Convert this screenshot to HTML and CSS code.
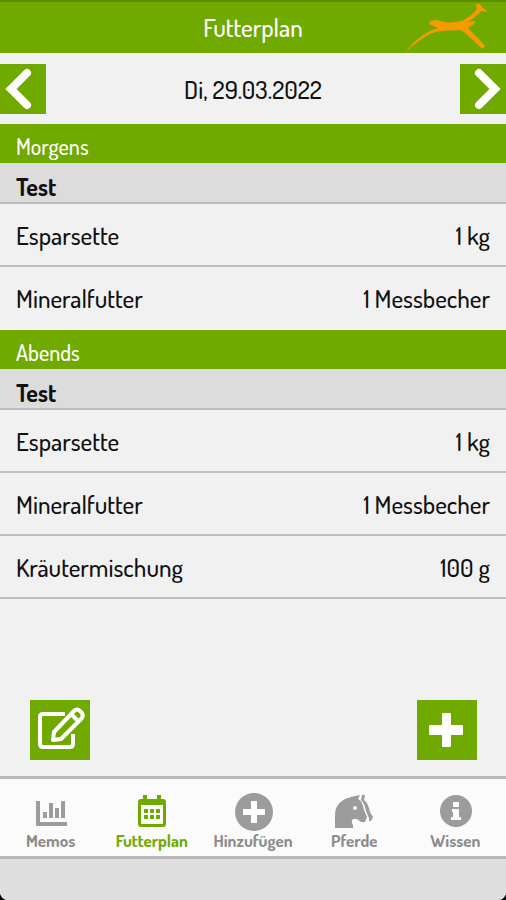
FILE: index.html
```html
<!DOCTYPE html>
<html lang="de">
<head>
    <meta charset="UTF-8">
    <meta name="viewport" content="width=device-width, initial-scale=1.0">
    <title>Futterplan</title>
    <link rel="stylesheet" href="styles.css">
</head>
<body>
    <div class="app">
        <header class="header">
            <h1>Futterplan</h1>
            <svg class="logo" viewBox="0 0 84 50" aria-hidden="true">
                <path d="M0 49C9 36 20 28 33 24L24 20L25 17L32 16L39 18C45 19 51 18 57 17C64 13 69 9 72 5L71 0H75L77 3L83 8L76 7C72 12 67 15 63 18L70 17L69 20L63 24C69 30 75 36 80 42L77 45C69 37 62 30 56 26C42 27 31 25 20 33C13 37 7 42 0 49Z"/>
            </svg>
        </header>

        <!-- Date switcher -->
        <div class="date-bar">
            <button type="button" class="date-button" aria-label="Vorheriger Tag">
                <svg width="46" height="50" viewBox="0 0 46 50"><path d="M27 9L11 25L27 41"/></svg>
            </button>
            <span class="date">Di, 29.03.2022</span>
            <button type="button" class="date-button" aria-label="Nächster Tag">
                <svg width="46" height="50" viewBox="0 0 46 50"><path d="M19 9L35 25L19 41"/></svg>
            </button>
        </div>

        <main class="plan">
            <section>
                <h2>Morgens</h2>
                <h3>Test</h3>
                <ul>
                    <li><span>Esparsette</span><span>1 kg</span></li>
                    <li><span>Mineralfutter</span><span>1 Messbecher</span></li>
                </ul>
            </section>
            <section>
                <h2>Abends</h2>
                <h3>Test</h3>
                <ul>
                    <li><span>Esparsette</span><span>1 kg</span></li>
                    <li><span>Mineralfutter</span><span>1 Messbecher</span></li>
                    <li><span>Kräutermischung</span><span>100 g</span></li>
                </ul>
            </section>
        </main>

        <div class="actions">
            <button type="button" class="action-button" aria-label="Bearbeiten">
                <svg width="60" height="60" viewBox="0 0 60 60" fill="none" stroke="#fff" stroke-width="4" stroke-linejoin="round">
                    <path d="M35 14H13Q10 14 10 17V44Q10 47 13 47H40Q43 47 43 44V34"/>
                    <path d="M24 32L44 11Q47 8 50 11L52 13Q54 16 51 19L31 39L23 40ZM41 14L48 21"/>
                </svg>
            </button>
            <button type="button" class="action-button" aria-label="Neu">
                <svg width="60" height="60" viewBox="0 0 60 60" fill="#fff">
                    <path d="M26 13H33Q34 13 34 14V25H45Q46 25 46 26V34Q46 35 45 35H34V46Q34 47 33 47H26Q25 47 25 46V35H13Q12 35 12 34V26Q12 25 13 25H25V14Q25 13 26 13Z"/>
                </svg>
            </button>
        </div>

        <!-- Tab bar -->
        <nav class="tabs">
            <a href="#memos">
                <svg viewBox="0 0 40 40" fill="none" stroke="currentColor">
                    <path stroke-width="4" d="M7 8V31H36"/>
                    <path stroke-width="4" d="M14 19V25M20 10V25M26 15V25M32 8V25"/>
                </svg>
                <span>Memos</span>
            </a>
            <a href="#futterplan" class="active">
                <svg viewBox="0 0 40 40" fill="currentColor">
                    <path fill-rule="evenodd" d="M11 2H15V6H25V2H29V6H31Q34 6 34 9V31Q34 34 31 34H9Q6 34 6 31V9Q6 6 9 6H11ZM9 12V31H31V12Z"/>
                    <path d="M12 16h4v4h-4zM18 16h4v4h-4zM24 16h4v4h-4zM12 22h4v4h-4zM18 22h4v4h-4zM24 22h4v4h-4z"/>
                </svg>
                <span>Futterplan</span>
            </a>
            <a href="#hinzufuegen">
                <svg viewBox="0 0 40 40">
                    <circle cx="21" cy="19" r="19" fill="currentColor"/>
                    <path fill="#fff" d="M18 8H24V16H32V22H24V30H18V22H10V16H18Z"/>
                </svg>
                <span>Hinzufügen</span>
            </a>
            <a href="#pferde">
                <svg viewBox="0 0 40 40" fill="currentColor">
                    <path fill-rule="evenodd" d="M1 35V22C1 12 8 6 17 4L26 2L24 6C28 8 29 12 30 17L33 24L31 29L27 29L23 26H19C17 28 18 31 19 32V35ZM21 13A2 2 0 1 0 21 17A2 2 0 1 0 21 13Z"/>
                    <path d="M28 2L31 2L30 7C34 10 35 15 36 19L39 24L37 28L35 28L35 25L32 18C31 13 30 10 27 7Z"/>
                </svg>
                <span>Pferde</span>
            </a>
            <a href="#wissen">
                <svg viewBox="0 0 40 40">
                    <circle cx="21" cy="18" r="16" fill="currentColor"/>
                    <path fill="#fff" d="M18 9H24V14H18ZM17 16H24V24H26V27H16V24H18V19H17Z"/>
                </svg>
                <span>Wissen</span>
            </a>
        </nav>
        <footer class="bottom"></footer>
    </div>
</body>
</html>
```
FILE: styles.css
```css
* {
    box-sizing: border-box;
}

body {
    margin: 0;
    background-color: #000;
    font-family: Dosis, "Liberation Sans Narrow", Lato, sans-serif;
    font-size: 25px;
    font-weight: 500;
    color: #111;
}

h1, h2, h3, ul {
    margin: 0;
    padding: 0;
    font-weight: 500;
}

button {
    padding: 0;
    border: none;
    background-color: #70a900;
    cursor: pointer;
}

svg {
    display: block;
}

.app {
    display: flex;
    flex-direction: column;
    min-height: 100vh;
    background-color: #f1f1f1;
    border-radius: 0 0 8px 8px;
    overflow: hidden;
}

.header {
    position: relative;
    display: flex;
    align-items: center;
    justify-content: center;
    height: 53px;
    padding-bottom: 2px;
    border-top: 2px solid #5d8e00;
    background-color: #70a900;
    color: #fff;
}

h1 {
    font-size: 25px;
}

/* Logo lies over the right end of the header */
.logo {
    position: absolute;
    top: 2px;
    right: 17px;
    width: 84px;
    height: 50px;
    fill: #f59a00;
}

.date-bar {
    display: flex;
    align-items: center;
    justify-content: space-between;
    height: 71px;
}

.date-button path {
    fill: none;
    stroke: #fff;
    stroke-width: 8;
    stroke-linecap: round;
}

h2 {
    height: 39px;
    padding: 0 16px;
    background-color: #70a900;
    color: #fff;
    font-size: 22px;
    line-height: 44px;
}

h3 {
    height: 41px;
    padding: 0 16px;
    border-bottom: 2px solid #bebebe;
    background-color: #dcdcdc;
    font-size: 24px;
    font-weight: bold;
    line-height: 48px;
}

li {
    display: flex;
    align-items: center;
    justify-content: space-between;
    height: 63px;
    padding: 0 16px;
    border-bottom: 2px solid #c0c0c0;
}

section:first-child li:last-child {
    border-bottom-color: transparent;
}

.actions {
    display: flex;
    justify-content: space-between;
    margin-top: auto;
    padding: 0 29px 16px 30px;
}

/* Tabs share the width evenly */
.tabs {
    display: flex;
    height: 83px;
    border-top: 3px solid #b8b8b8;
    border-bottom: 3px solid #b8b8b8;
    background-color: #fbfbfb;
}

.tabs a {
    display: flex;
    flex: 1;
    flex-direction: column;
    align-items: center;
    padding-top: 14px;
    color: #8c8c8c;
    font-size: 17px;
    font-weight: bold;
    line-height: 16px;
    text-decoration: none;
}

.tabs svg {
    width: 40px;
    height: 40px;
    color: #9c9c9c;
}

.tabs a.active,
.tabs a.active svg {
    color: #70a900;
}

.bottom {
    height: 41px;
    background-color: #dfdfdf;
}
```
